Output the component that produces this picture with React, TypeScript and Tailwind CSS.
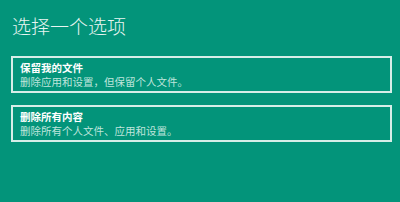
import React from 'react';

const options = [
  { title: '保留我的文件', desc: '删除应用和设置，但保留个人文件。' },
  { title: '删除所有内容', desc: '删除所有个人文件、应用和设置。' },
];

const App: React.FC = () => {
  return (
    <div
      className="w-[400px] h-[202px] bg-[#03947a] pl-[11px] pr-[8px] pt-[13px] overflow-hidden"
      style={{ fontFamily: '"Noto Sans CJK SC", "Noto Sans", sans-serif' }}
    >
      <h1 className="text-[19px] leading-[26px] font-light text-[#e8f5f1] pl-px">选择一个选项</h1>
      <div className="mt-[17px] flex flex-col gap-[12px]">
        {options.map(opt => (
          <div key={opt.title} className="h-[37px] border-2 border-[#d6eee8] px-[7px] pt-[3px]">
            <div className="text-[10.5px] leading-[14px] font-bold text-white">{opt.title}</div>
            <div className="text-[10.5px] leading-[14px] text-[#bfe5dc]">{opt.desc}</div>
          </div>
        ))}
      </div>
    </div>
  );
};

export default App;
